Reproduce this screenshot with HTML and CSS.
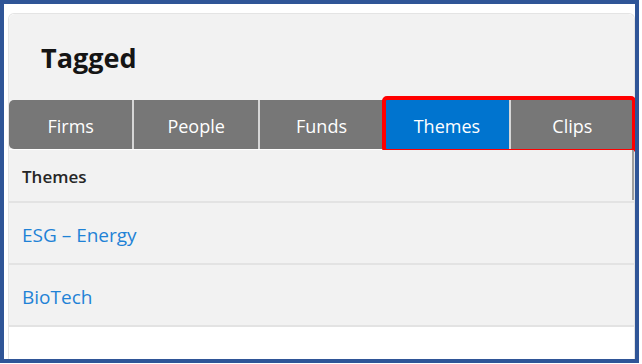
FILE: index.html
```html
<!DOCTYPE html>
<html lang="en">
<head>
    <meta charset="UTF-8">
    <meta name="viewport" content="width=device-width, initial-scale=1.0">
    <title>Tagged</title>
    <link rel="stylesheet" href="styles.css">
</head>
<body>
    <div class="frame">
        <div class="card">
            <div class="card-head">
                <h1>Tagged</h1>
            </div>

            <div class="tabs">
                <div class="tab">Firms</div>
                <div class="tab">People</div>
                <div class="tab">Funds</div>
                <div class="tab active">Themes</div>
                <div class="tab">Clips</div>
            </div>
            <!-- red callout drawn over the last two tabs -->
            <div class="callout"></div>

            <div class="list">
                <div class="list-head">
                    Themes
                    <span class="thumb"></span>
                </div>
                <div class="row"><a href="#">ESG &ndash; Energy</a></div>
                <div class="row"><a href="#">BioTech</a></div>
            </div>
        </div>
    </div>
</body>
</html>
```

FILE: styles.css
```css
* {
    box-sizing: border-box;
}

body {
    margin: 0;
    background: #fff;
    font-family: "Open Sans", "Segoe UI", sans-serif;
}

.frame {
    width: 639px;
    height: 363px;
    border: 4px solid #2f5597;
    padding: 9px 0 0 4px;
    overflow: hidden;
}

.card {
    position: relative;
    height: 100%;
    background: #fff;
    border: 1px solid #e4e4e4;
    border-bottom: none;
    border-radius: 6px 6px 0 0;
}

.card-head {
    height: 86px;
    display: flex;
    align-items: center;
    padding-left: 32px;
    background: #f2f2f2;
    border-radius: 6px 6px 0 0;
}

.card-head h1 {
    margin: 0;
    font-size: 27px;
    font-weight: 700;
    color: #151515;
}

.tabs {
    display: flex;
    height: 49px;
    background: #f2f2f2;
}

.tab {
    flex: 1;
    display: flex;
    align-items: center;
    justify-content: center;
    padding-top: 2px;
    background: #777;
    color: #fff;
    font-size: 18px;
    border-left: 2px solid #d6d6d6;
}

.tab:first-child {
    border-left: none;
    border-radius: 5px 0 0 5px;
}

.tab.active {
    background: #0074cf;
}

.callout {
    position: absolute;
    left: 373px;
    top: 82px;
    width: 254px;
    height: 57px;
    border: 4px solid #ff0000;
    border-radius: 5px;
}

.list {
    margin-top: 1px;
}

.list-head {
    position: relative;
    height: 53px;
    display: flex;
    align-items: center;
    padding: 2px 0 0 13px;
    background: #f2f2f2;
    border-bottom: 2px solid #e3e3e3;
    font-size: 17px;
    font-weight: 600;
    color: #262626;
}

.thumb {
    position: absolute;
    right: 0;
    top: 0;
    width: 2px;
    height: 50px;
    background: #9e9e9e;
}

.row {
    height: 62px;
    display: flex;
    align-items: center;
    padding: 3px 0 0 13px;
    background: #f2f2f2;
    border-bottom: 2px solid #e3e3e3;
}

.row a {
    color: #1f82d6;
    text-decoration: none;
    font-size: 19px;
}
```
